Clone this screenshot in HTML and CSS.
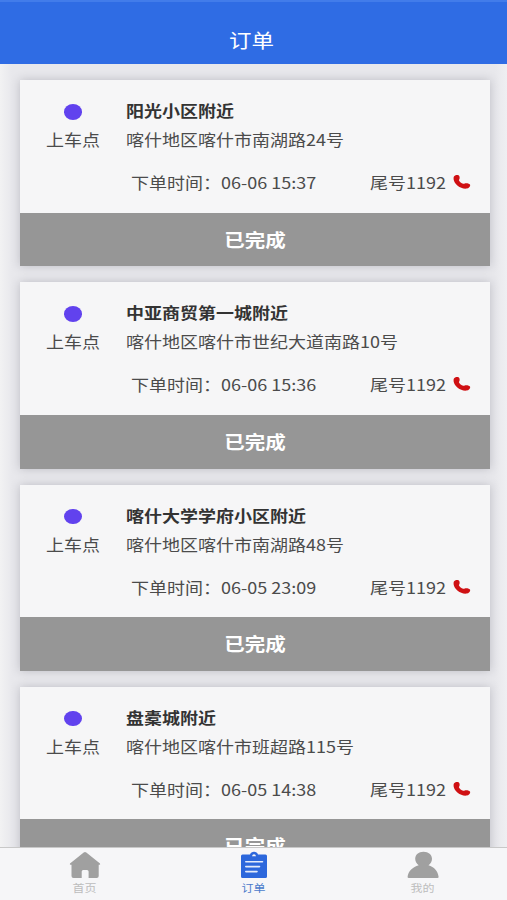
FILE: index.html
```html
<!DOCTYPE html>
<html lang="zh-CN">
<head>
    <meta charset="UTF-8">
    <meta name="viewport" content="width=device-width, initial-scale=1.0">
    <title>订单</title>
    <link rel="stylesheet" href="styles.css">
</head>
<body>
    <svg class="icon-defs" aria-hidden="true">
        <symbol id="icon-phone" viewBox="0 0 18 16" preserveAspectRatio="none">
            <path d="M.8 2.800C1.500 1.300 3.400.8 5 1.100c1.300.4 1.900 2 1.600 3.300C6.400 5.300 5.700 5.800 6 6.600c.7 1.300 2.300 2.700 4.200 3.100 1.200.1 1.700-.5 2.900-.5 1.700 0 3.900.6 4.100 1.700.1 1.700-1.400 3.400-3.700 3.700C7.600 15.200 1.200 10.300.6 5.300.5 4.200.6 3.400.8 2.800z"/>
        </symbol>
    </svg>

    <header class="header">
        <h1>订单</h1>
    </header>

    <main class="orders">
        <article class="order-card">
            <div class="order-body">
                <div class="pickup">
                    <span class="dot"></span>
                    <span class="pickup-label">上车点</span>
                </div>
                <div class="info">
                    <h2>阳光小区附近</h2>
                    <p class="address">喀什地区喀什市南湖路24号</p>
                    <div class="meta">
                        <span class="time">下单时间：06-06 15:37</span>
                        <span class="tail">尾号1192</span>
                        <svg class="phone"><use href="#icon-phone"/></svg>
                    </div>
                </div>
            </div>
            <div class="status"><span>已完成</span></div>
        </article>

        <article class="order-card">
            <div class="order-body">
                <div class="pickup">
                    <span class="dot"></span>
                    <span class="pickup-label">上车点</span>
                </div>
                <div class="info">
                    <h2>中亚商贸第一城附近</h2>
                    <p class="address">喀什地区喀什市世纪大道南路10号</p>
                    <div class="meta">
                        <span class="time">下单时间：06-06 15:36</span>
                        <span class="tail">尾号1192</span>
                        <svg class="phone"><use href="#icon-phone"/></svg>
                    </div>
                </div>
            </div>
            <div class="status"><span>已完成</span></div>
        </article>

        <article class="order-card">
            <div class="order-body">
                <div class="pickup">
                    <span class="dot"></span>
                    <span class="pickup-label">上车点</span>
                </div>
                <div class="info">
                    <h2>喀什大学学府小区附近</h2>
                    <p class="address">喀什地区喀什市南湖路48号</p>
                    <div class="meta">
                        <span class="time">下单时间：06-05 23:09</span>
                        <span class="tail">尾号1192</span>
                        <svg class="phone"><use href="#icon-phone"/></svg>
                    </div>
                </div>
            </div>
            <div class="status"><span>已完成</span></div>
        </article>

        <article class="order-card">
            <div class="order-body">
                <div class="pickup">
                    <span class="dot"></span>
                    <span class="pickup-label">上车点</span>
                </div>
                <div class="info">
                    <h2>盘橐城附近</h2>
                    <p class="address">喀什地区喀什市班超路115号</p>
                    <div class="meta">
                        <span class="time">下单时间：06-05 14:38</span>
                        <span class="tail">尾号1192</span>
                        <svg class="phone"><use href="#icon-phone"/></svg>
                    </div>
                </div>
            </div>
            <div class="status"><span>已完成</span></div>
        </article>
    </main>

    <nav class="tabbar">
        <a class="tab">
            <svg width="32" height="28" viewBox="0 0 32 28">
                <path d="M14.700 1.600Q16 .6 17.300 1.600L31 12.400Q31.600 13.500 30.400 13.700H29.700V25Q29.700 27 27.700 27H19.600V20.500Q19.600 19 18 19H14.200Q12.700 19 12.700 20.500V27H4.500Q2.500 27 2.500 25V13.700H1.600Q.4 13.500 1 12.400z"/>
            </svg>
            <span>首页</span>
        </a>
        <a class="tab active">
            <svg width="32" height="28" viewBox="0 0 32 28">
                <path d="M4.500 3.500H12Q13 .7 16 .7T20 3.500H27.500Q29 3.500 29 5V25.500Q29 27 27.500 27H4.500Q3 27 3 25.500V5Q3 3.500 4.500 3.500z"/>
                <path d="M14 5.200Q14.400 3.200 16 3.200T18 5.200z" fill="#f6f6f8"/>
                <path d="M7.800 10.700H24.500M7.800 15.600H21.500M7.800 20.600H19" stroke="#e3ebfb" stroke-width="1.600" stroke-linecap="round"/>
            </svg>
            <span>订单</span>
        </a>
        <a class="tab">
            <svg width="32" height="28" viewBox="0 0 32 28">
                <path d="M16.500 .7C21.500 .7 25 3.800 25 7.800C25 10.800 23.500 12.500 21.500 14.300C27 15.900 31 20.200 31.600 25.700Q31.700 27 30.500 27H1.700Q.5 27 .6 25.700C1.200 20.200 5.800 16 11.700 14.300C9.700 12.500 8.200 10.800 8.200 7.800C8.200 3.800 11.500 .7 16.500 .7z"/>
            </svg>
            <span>我的</span>
        </a>
    </nav>
</body>
</html>
```

FILE: styles.css
```css
:root {
    --primary: #2f6ce4;
    --bg: #e8e8ec;
    --card-bg: #f6f6f7;
    --status: #969696;
    --text: #4b4b4b;
    --squash: scaleY(0.87);
}

* {
    box-sizing: border-box;
}

body {
    display: flex;
    flex-direction: column;
    height: 100vh;
    margin: 0;
    overflow: hidden;
    font-family: "Noto Sans CJK SC", sans-serif;
    font-size: 18px;
    color: var(--text);
    background: var(--bg);
}

.icon-defs {
    display: none;
}

.header {
    flex: none;
    height: 64px;
    padding: 23px 4px 0 0;
    text-align: center;
    color: #fff;
    background: var(--primary);
    border-top: 2px solid #427cea;
}

.header h1 {
    margin: 0;
    font-size: 22.5px;
    font-weight: 400;
    line-height: 28px;
    transform: var(--squash);
}

.orders {
    flex: 1;
    min-height: 0;
    padding: 16px 17px 0 20px;
    overflow: hidden;
    background: linear-gradient(90deg, #f2f2f3, #e8e8ec 12px, #e8e8ec 495px, #efeff2);
}

.order-card {
    height: 186.3px;
    margin-bottom: 16px;
    background: var(--card-bg);
    box-shadow: 0 0 9px rgba(60, 60, 75, 0.25);
}

.order-body {
    display: flex;
    height: 132.5px;
    padding-top: 16px;
}

.pickup {
    display: flex;
    flex-direction: column;
    align-items: center;
    width: 106px;
}

.dot {
    width: 18px;
    height: 15.5px;
    margin: 8px 0 5.5px;
    border-radius: 50%;
    background: #6142ee;
}

.pickup-label {
    line-height: 28px;
    transform: var(--squash);
}

.info {
    flex: 1;
}

.info h2,
.info p {
    margin: 0;
    font-size: 18px;
    line-height: 29px;
    white-space: nowrap;
    transform: var(--squash);
}

.info h2 {
    color: #333;
    font-weight: 700;
}

.meta {
    display: flex;
    align-items: center;
    height: 28px;
    margin-top: 14px;
    padding: 0 19px 0 5px;
    white-space: nowrap;
}

.time,
.tail {
    transform: var(--squash);
}

.tail {
    margin-left: auto;
}

.phone {
    width: 18px;
    height: 16px;
    margin-left: 7px;
    fill: #cf1013;
}

.status {
    height: 53.8px;
    text-align: center;
    font-size: 20.5px;
    font-weight: 700;
    line-height: 53px;
    color: #fff;
    background: var(--status);
}

.status span {
    display: inline-block;
    transform: var(--squash);
}

.tabbar {
    display: flex;
    flex: none;
    height: 53px;
    background: #f6f6f8;
    border-top: 1px solid #c8c8c8;
}

.tab {
    display: flex;
    flex: 1;
    flex-direction: column;
    align-items: center;
    padding-top: 3px;
    font-size: 12px;
    line-height: 18px;
    color: #bdbdbd;
}

.tab svg {
    fill: #a0a0a0;
}

.tab span {
    transform: var(--squash);
}

.tab.active {
    color: #4c7bcb;
}

.tab.active svg {
    fill: #2c67dc;
}
```
